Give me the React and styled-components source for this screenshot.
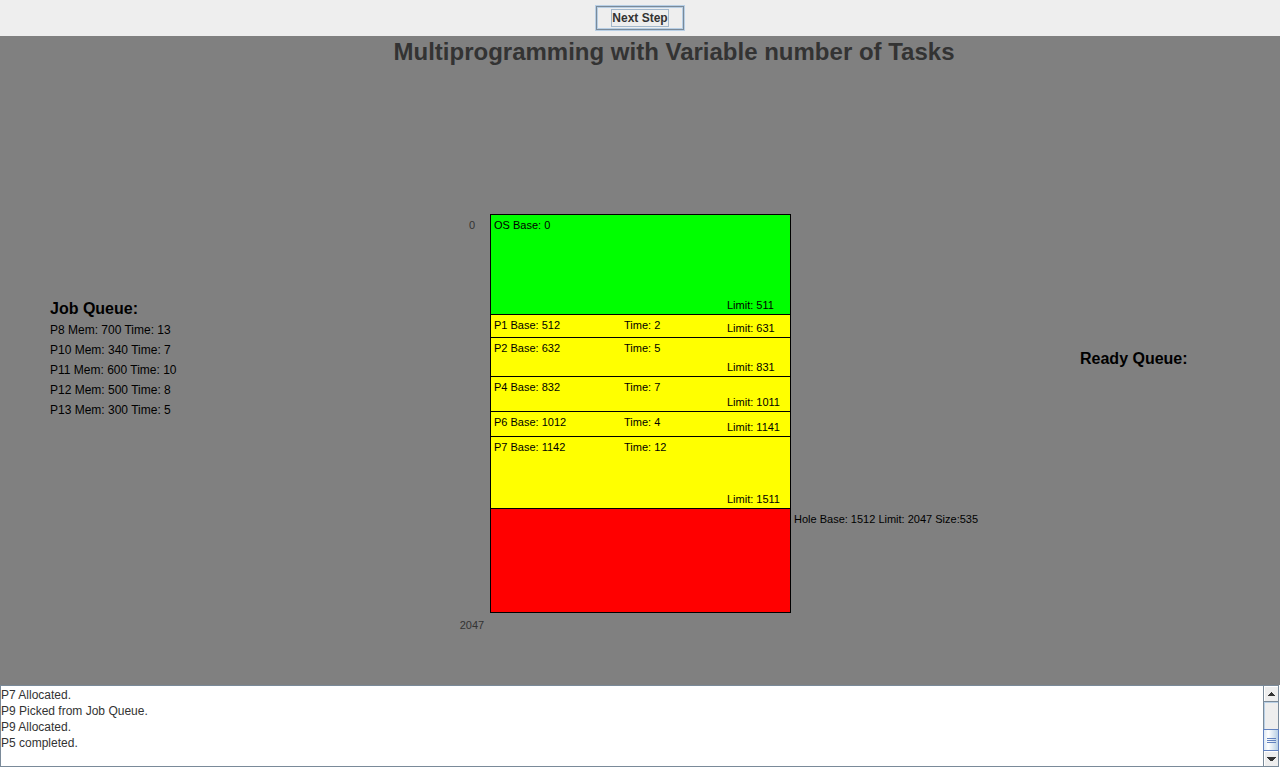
import React from "react";
import styled, { createGlobalStyle } from "styled-components";

const GlobalStyle = createGlobalStyle`
  *, *::before, *::after { box-sizing: border-box; }
  body {
    margin: 0;
    background: #ffffff;
    font-family: "Liberation Sans", Arial, Helvetica, sans-serif;
    font-size: 12px;
    color: #333333;
  }
`;

const UNITS_PER_PIXEL = 5.12;

const jobs = [
  { name: "P8", mem: 700, time: 13 },
  { name: "P10", mem: 340, time: 7 },
  { name: "P11", mem: 600, time: 10 },
  { name: "P12", mem: 500, time: 8 },
  { name: "P13", mem: 300, time: 5 },
];

const segments = [
  { name: "OS", kind: "os", base: 0, limit: 511 },
  { name: "P1", kind: "task", base: 512, limit: 631, time: 2 },
  { name: "P2", kind: "task", base: 632, limit: 831, time: 5 },
  { name: "P4", kind: "task", base: 832, limit: 1011, time: 7 },
  { name: "P6", kind: "task", base: 1012, limit: 1141, time: 4 },
  { name: "P7", kind: "task", base: 1142, limit: 1511, time: 12 },
  { name: "Hole", kind: "hole", base: 1512, limit: 2047 },
];

const log = [
  "P7 Allocated.",
  "P9 Picked from Job Queue.",
  "P9 Allocated.",
  "P5 completed.",
];

const fills = { os: "#00ff00", task: "#ffff00", hole: "#ff0000" };

const heightOf = (s) => Math.floor((s.limit - s.base + 1) / UNITS_PER_PIXEL);

const Page = styled.div`
  display: flex;
  flex-direction: column;
  min-height: 100vh;
`;

const Toolbar = styled.header`
  display: flex;
  justify-content: center;
  padding: 5px 0;
  background: #eeeeee;
`;

const StepButton = styled.button`
  display: flex;
  align-items: center;
  height: 26px;
  padding: 0 15px;
  border: 1px solid #b8cfe5;
  box-shadow: inset 0 0 0 1px #7a8a99, inset 0 0 0 2px #b8cfe5;
  background: #eeeeee;
  color: #333333;
  font: bold 12px/16px "Liberation Sans", Arial, sans-serif;
`;

const FocusLabel = styled.span`
  border: 1px solid #a3b8cc;
`;

const Canvas = styled.main`
  flex: 1;
  background: #808080;
  color: #000000;
`;

const Title = styled.h1`
  margin: 0;
  padding-left: 68px;
  text-align: center;
  font-size: 24px;
  line-height: 32px;
  color: #333333;
`;

const Board = styled.div`
  display: grid;
  grid-template-columns: minmax(0, 1fr) 301px minmax(0, 1fr);
  padding: 146px 0 48px 1px;
`;

const Side = styled.div`
  display: flex;
`;

const Queue = styled.section`
  flex: ${(p) => (p.$width ? `0 0 ${p.$width}` : "1")};
  padding-top: ${(p) => p.$top};
  padding-left: ${(p) => p.$indent || "0"};
`;

const QueueTitle = styled.h2`
  margin: 0;
  font-size: 16px;
  line-height: 20px;
`;

const QueueList = styled.ul`
  margin: 0;
  padding: 1px 0 0;
  list-style: none;
  line-height: 20px;
`;

const Addresses = styled.div`
  display: flex;
  flex-direction: column;
  justify-content: space-between;
  width: 36px;
  padding-top: 3px;
  margin-bottom: -20px;
  text-align: center;
  font-size: 11px;
  line-height: 16px;
  color: #333333;
`;

const MemoryMap = styled.div`
  border: solid #000000;
  border-width: 0 1px 1px;
  font-size: 11px;
  line-height: 16px;
`;

const Segment = styled.div`
  display: grid;
  grid-template-columns: 130px 103px 1fr;
  height: ${(p) => p.$height}px;
  padding: 2px 0 1px 3px;
  border-top: 1px solid #000000;
  background: ${(p) => fills[p.$kind]};
`;

const Limit = styled.span`
  grid-column: 3;
  align-self: end;
`;

const HoleLabels = styled.div`
  flex: 1;
  font-size: 11px;
  line-height: 16px;
`;

const HoleLabel = styled.div`
  height: ${(p) => p.$height}px;
  padding: 3px 0 0 3px;
`;

const LogPanel = styled.section`
  display: flex;
  height: 82px;
  margin: 0 1px 1px 0;
  border: 1px solid #7a8a99;
  background: #ffffff;
`;

const LogText = styled.div`
  flex: 1;
  padding-top: 1px;
  line-height: 16px;
`;

const ScrollBar = styled.div`
  display: flex;
  flex-direction: column;
  width: 15px;
  border-left: 1px solid #7a8a99;
  background: #eeeeee;
`;

const ArrowButton = styled.button`
  display: flex;
  align-items: center;
  justify-content: center;
  height: 15px;
  padding: 0;
  border: solid #ffffff;
  border-width: 1px 0 0 1px;
  background: #eeeeee;
`;

const Track = styled.div`
  flex: 1;
  display: flex;
  flex-direction: column;
  justify-content: flex-end;
  border-top: 1px solid #7a8a99;
  box-shadow: inset 1px 1px 0 #b8cfe5;
`;

const Thumb = styled.div`
  display: flex;
  flex-direction: column;
  align-items: center;
  justify-content: center;
  gap: 1px;
  height: 22px;
  margin: 0 -1px;
  border: 1px solid #6382bf;
  background: linear-gradient(to right, #dde8f3, #ffffff 30%, #b8cfe5);
`;

const Grip = styled.span`
  width: 9px;
  height: 1px;
  background: #6382bf;
`;

const Arrow = ({ width, d }) => (
  <svg
    width={width}
    height="4"
    viewBox={`0 0 ${width} 4`}
    shapeRendering="crispEdges"
    aria-hidden="true"
  >
    <path d={d} fill="#333333" />
  </svg>
);

export default function App() {
  return (
    <Page>
      <GlobalStyle />
      <Toolbar>
        <StepButton type="button">
          <FocusLabel>Next Step</FocusLabel>
        </StepButton>
      </Toolbar>
      <Canvas>
        <Title>Multiprogramming with Variable number of Tasks</Title>
        <Board>
          <Side>
            <Queue $top="85px" $indent="49px">
              <QueueTitle>Job Queue:</QueueTitle>
              <QueueList>
                {jobs.map((j) => (
                  <li key={j.name}>{`${j.name} Mem: ${j.mem} Time: ${j.time}`}</li>
                ))}
              </QueueList>
            </Queue>
            <Addresses>
              <span>0</span>
              <span>2047</span>
            </Addresses>
          </Side>
          <MemoryMap>
            {segments.map((s) => (
              <Segment key={s.name} $kind={s.kind} $height={heightOf(s)}>
                {s.kind !== "hole" && (
                  <>
                    <span>{`${s.name} Base: ${s.base}`}</span>
                    {s.time && <span>{`Time: ${s.time}`}</span>}
                    <Limit>{`Limit: ${s.limit}`}</Limit>
                  </>
                )}
              </Segment>
            ))}
          </MemoryMap>
          <Side>
            <HoleLabels>
              {segments.map((s) => (
                <HoleLabel key={s.name} $height={heightOf(s)}>
                  {s.kind === "hole" &&
                    `Hole Base: ${s.base} Limit: ${s.limit} Size:${s.limit - s.base}`}
                </HoleLabel>
              ))}
            </HoleLabels>
            <Queue $top="135px" $width="200px">
              <QueueTitle>Ready Queue:</QueueTitle>
            </Queue>
          </Side>
        </Board>
      </Canvas>
      <LogPanel aria-label="Log">
        <LogText>
          {log.map((line) => (
            <div key={line}>{line}</div>
          ))}
        </LogText>
        <ScrollBar>
          <ArrowButton type="button" aria-label="Scroll up">
            <Arrow width={7} d="M3 0h1v1h1v1h1v1h1v1H0V3h1V2h1V1h1z" />
          </ArrowButton>
          <Track>
            <Thumb>
              <Grip />
              <Grip />
              <Grip />
            </Thumb>
          </Track>
          <ArrowButton type="button" aria-label="Scroll down">
            <Arrow width={9} d="M0 0h9v1H8v1H7v1H6v1H3V3H2V2H1V1H0z" />
          </ArrowButton>
        </ScrollBar>
      </LogPanel>
    </Page>
  );
}
